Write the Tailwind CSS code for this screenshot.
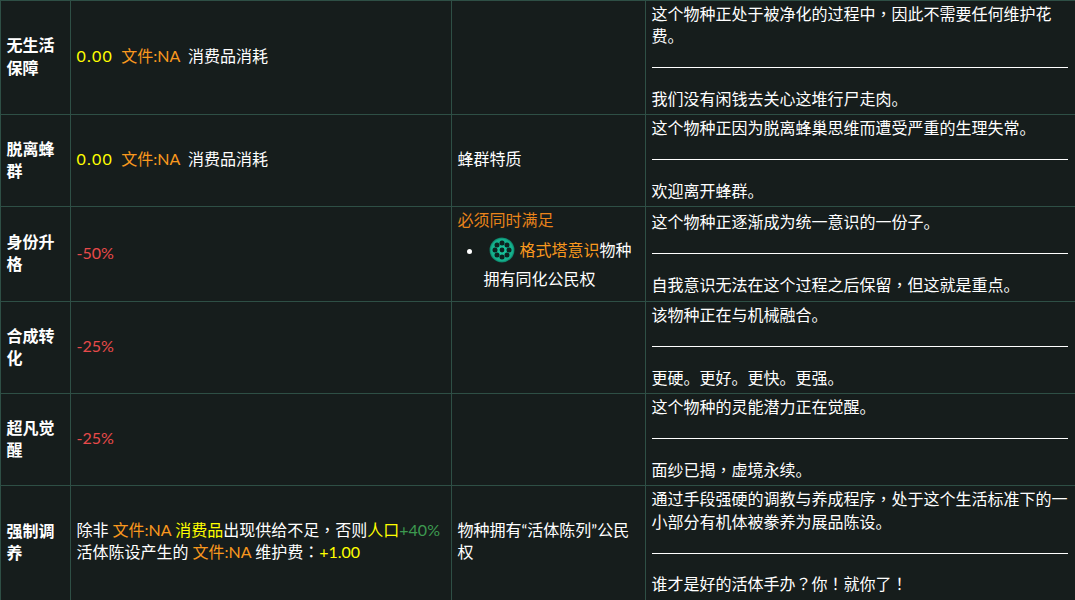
<!DOCTYPE html>
<html lang="zh">
<head>
<meta charset="utf-8">
<script src="https://cdn.jsdelivr.net/npm/@tailwindcss/browser@4"></script>
</head>
<body class="bg-[#161d1c] text-white font-['Lato','Noto_Sans_CJK_TC',sans-serif] text-[16px] leading-[22.4px] overflow-hidden">
<table class="w-[1075px] table-fixed border-collapse [&_td]:border [&_td]:border-[#2e4f45] [&_td]:pl-[5.5px] [&_td]:pr-[7px] [&_td]:pt-[2px] [&_td]:pb-[4px] [&_td]:align-middle [&_hr]:my-[19.6px] [&_hr]:border-t [&_hr]:border-white">
<colgroup><col class="w-[70px]"><col class="w-[381px]"><col class="w-[194px]"><col class="w-[430px]"></colgroup>
<tbody>
<tr>
<td class="font-bold">无生活保障</td>
<td class="!pt-[1px] !pb-[5px]"><span class="text-[#ffff00] tracking-[1.25px]">0.00</span>&nbsp; <span class="text-[#f9981e]">文件:NA</span>&nbsp; 消费品消耗</td>
<td></td>
<td>这个物种正处于被净化的过程中<span lang="zh-Hant">，</span>因此不需要任何维护花费。<hr>我们没有闲钱去关心这堆行尸走肉。</td>
</tr>
<tr>
<td class="font-bold">脱离蜂群</td>
<td class="!pt-[1px] !pb-[5px]"><span class="text-[#ffff00] tracking-[1.25px]">0.00</span>&nbsp; <span class="text-[#f9981e]">文件:NA</span>&nbsp; 消费品消耗</td>
<td class="!pt-[1px] !pb-[5px]">蜂群特质</td>
<td>这个物种正因为脱离蜂巢思维而遭受严重的生理失常。<hr>欢迎离开蜂群。</td>
</tr>
<tr>
<td class="font-bold">身份升格</td>
<td class="text-[#e84a4a]">-50%</td>
<td>
<div class="text-[#e8831a]">必须同时满足</div>
<ul class="list-disc pl-[26px] mt-[3.6px] mb-[4px] leading-[29px]">
<li><svg class="inline-block w-[26px] h-[26px] ml-[5px] mr-[5px] align-[-7px]" viewBox="0 0 26 26"><defs><radialGradient id="g"><stop offset="0" stop-color="#1ac9a0"/><stop offset="0.85" stop-color="#14b08c"/><stop offset="1" stop-color="#0c7a62"/></radialGradient></defs><circle cx="13" cy="13" r="12.5" fill="url(#g)"/><g fill="#0d2320"><circle cx="13" cy="13" r="2.4"/><circle cx="13" cy="6" r="2.5"/><circle cx="13" cy="20" r="2.5"/><circle cx="6" cy="13" r="2.5"/><circle cx="20" cy="13" r="2.5"/><circle cx="8" cy="8" r="2.5"/><circle cx="18" cy="8" r="2.5"/><circle cx="8" cy="18" r="2.5"/><circle cx="18" cy="18" r="2.5"/></g></svg><span class="text-[#f9981e]">格式塔意识</span>物种拥有同化公民权</li>
</ul>
</td>
<td>这个物种正逐渐成为统一意识的一份子。<hr>自我意识无法在这个过程之后保留<span lang="zh-Hant">，</span>但这就是重点。</td>
</tr>
<tr>
<td class="font-bold">合成转化</td>
<td class="text-[#e84a4a] !pt-[1px] !pb-[5px]">-25%</td>
<td></td>
<td>该物种正在与机械融合。<hr>更硬。更好。更快。更强。</td>
</tr>
<tr>
<td class="font-bold">超凡觉醒</td>
<td class="text-[#e84a4a] !pt-[1px] !pb-[5px]">-25%</td>
<td></td>
<td>这个物种的灵能潜力正在觉醒。<hr>面纱已揭<span lang="zh-Hant">，</span>虚境永续。</td>
</tr>
<tr>
<td class="font-bold">强制调养</td>
<td class="whitespace-nowrap !pt-[1px] !pb-[5px]">除非 <span class="text-[#f9981e]">文件:NA</span> <span class="text-[#ffff00]">消费品</span>出现供给不足<span lang="zh-Hant">，</span>否则<span class="text-[#ffff00]">人口</span><span class="text-[#3d9a50]">+40%</span><br>活体陈设产生的 <span class="text-[#f9981e]">文件:NA</span> 维护费<span lang="zh-Hant">：</span><span class="text-[#ffff00]">+1.00</span></td>
<td class="!pt-[1px] !pb-[5px]">物种拥有“活体陈列”公民权</td>
<td>通过手段强硬的调教与养成程序<span lang="zh-Hant">，</span>处于这个生活标准下的一小部分有机体被豢养为展品陈设。<hr>谁才是好的活体手办<span lang="zh-Hant">？</span>你<span lang="zh-Hant">！</span>就你了<span lang="zh-Hant">！</span></td>
</tr>
</tbody>
</table>
</body>
</html>
